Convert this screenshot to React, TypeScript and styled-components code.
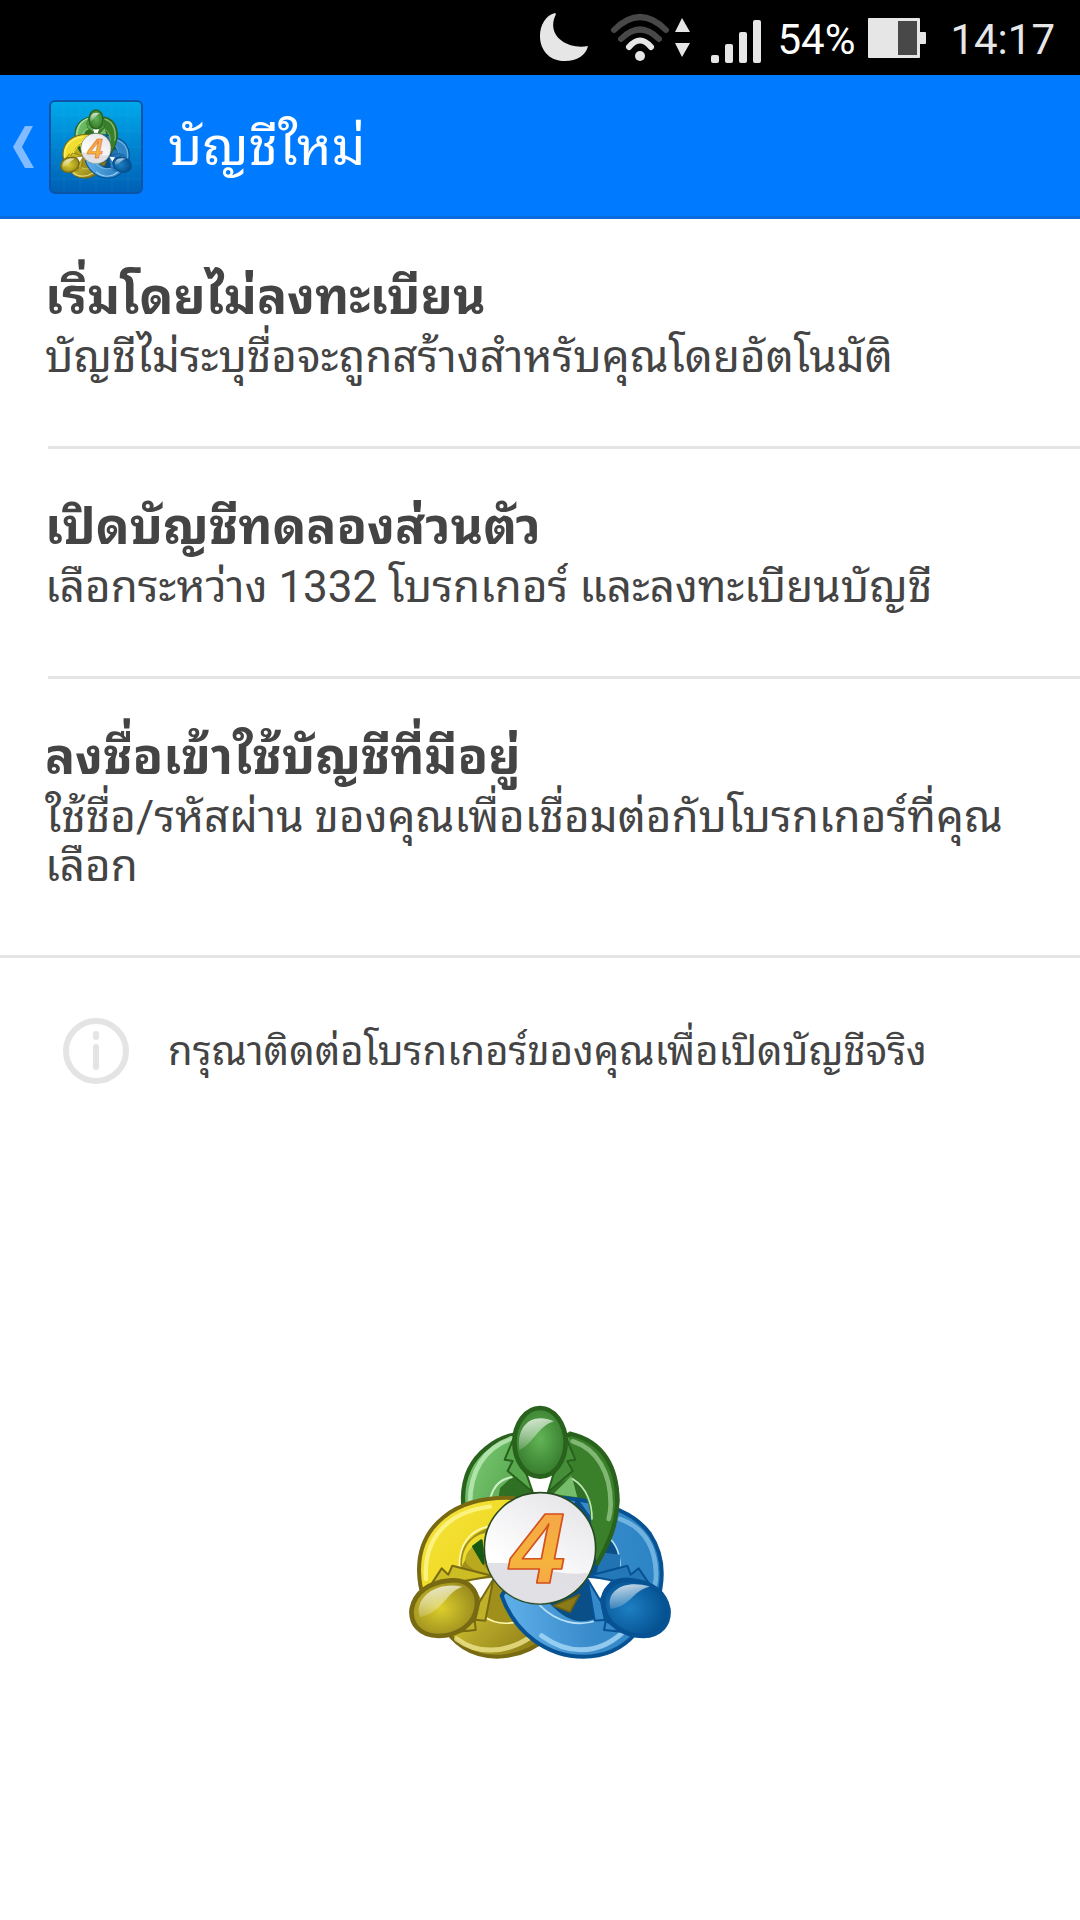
import React from "react";
import styled, { createGlobalStyle } from "styled-components";

const GlobalStyle = createGlobalStyle`
  *, *::before, *::after { box-sizing: border-box; }
  body {
    margin: 0;
    background: #fff;
    color: #444;
    font-family: Roboto, "Noto Sans Thai Looped", "Droid Sans Thai", "Noto Sans Thai UI", "Noto Sans Thai", "Noto Sans", sans-serif;
  }
`;

const Screen = styled.div`
  display: flex;
  flex-direction: column;
  min-height: 100vh;
`;

const StatusBar = styled.div`
  display: flex;
  align-items: center;
  justify-content: flex-end;
  height: 75px;
  padding: 0 25px 0 0;
  background: #000;
`;

const StatusIcons = styled.svg`
  display: block;
  width: 222px;
  height: 75px;
  margin-right: 16px;
`;

const StatusText = styled.span<{ $bright?: boolean }>`
  padding-top: 3px;
  color: ${(p) => (p.$bright ? "#fff" : "#e6e6e6")};
  font-size: 42px;
  line-height: 49px;
`;

const Battery = styled.svg`
  display: block;
  width: 58px;
  height: 75px;
  margin: 0 24px 0 13px;
`;

const AppBar = styled.header`
  display: flex;
  align-items: center;
  height: 144px;
  padding: 3px 48px 0 13px;
  background: #007aff;
  border-bottom: 3px solid #0a6bdc;
  color: #fff;
`;

const BackButton = styled.button`
  display: flex;
  align-items: center;
  padding: 0;
  border: 0;
  background: none;
  cursor: pointer;
`;

const BackArrow = styled.svg`
  width: 21px;
  height: 42px;
  margin-right: 15px;
`;

const AppIcon = styled.svg`
  width: 94px;
  height: 94px;
`;

const Title = styled.h1`
  margin: 0 0 0 25px;
  font-size: 53px;
  font-weight: 400;
  line-height: 64px;
`;

const List = styled.ul`
  margin: 0;
  padding: 0;
  list-style: none;
  border-bottom: 3px solid #e4e4e4;
`;

const Item = styled.li`
  & + &::before {
    content: "";
    display: block;
    height: 3px;
    margin-left: 48px;
    background: #e4e4e4;
  }
`;

const Option = styled.button`
  display: block;
  width: 100%;
  padding: 46px 48px 64px 45px;
  border: 0;
  background: none;
  color: inherit;
  font: inherit;
  text-align: left;
  cursor: pointer;
`;

const OptionTitle = styled.span`
  display: block;
  padding-bottom: 4px;
  font-size: 50px;
  font-weight: 700;
  line-height: 64px;
`;

const OptionText = styled.span`
  display: block;
  font-size: 44px;
  line-height: 49px;
`;

const Notice = styled.p`
  display: flex;
  align-items: center;
  gap: 39px;
  margin: 0;
  padding: 60px 48px 0 63px;
  font-size: 40px;
  line-height: 49px;
`;

const InfoIcon = styled.svg`
  flex: none;
  width: 66px;
  height: 66px;
`;

const Brand = styled.footer`
  display: flex;
  justify-content: center;
  padding-top: 321px;
`;

const BrandLogo = styled.svg`
  width: 264px;
  height: 254px;
`;

function Emblem({ id }: { id: string }) {
  const url = (name: string) => `url(#${id}-${name})`;
  return (
    <g strokeLinejoin="round" strokeLinecap="round">
      <defs>
        <linearGradient id={`${id}-green`} x1="0" y1="0.2" x2="1" y2="0.6">
          <stop offset="0" stopColor="#7cc873" />
          <stop offset="0.35" stopColor="#5bab54" />
          <stop offset="0.7" stopColor="#3b7f2b" />
          <stop offset="1" stopColor="#357a25" />
        </linearGradient>
        <linearGradient id={`${id}-yellow`} x1="0.1" y1="0.2" x2="0.8" y2="0.9">
          <stop offset="0" stopColor="#f3e033" />
          <stop offset="0.35" stopColor="#efd923" />
          <stop offset="0.65" stopColor="#b5a629" />
          <stop offset="1" stopColor="#8d7d16" />
        </linearGradient>
        <linearGradient id={`${id}-blue`} x1="0" y1="0.6" x2="1" y2="0.5">
          <stop offset="0" stopColor="#5fb0ea" />
          <stop offset="0.5" stopColor="#3a8ccb" />
          <stop offset="1" stopColor="#2b84c4" />
        </linearGradient>
        <radialGradient id={`${id}-greenHead`} cx="0.5" cy="0.45" r="0.6">
          <stop offset="0" stopColor="#62b457" />
          <stop offset="1" stopColor="#317527" />
        </radialGradient>
        <radialGradient id={`${id}-yellowHead`} cx="0.45" cy="0.5" r="0.6">
          <stop offset="0" stopColor="#ddce2c" />
          <stop offset="1" stopColor="#94861c" />
        </radialGradient>
        <radialGradient id={`${id}-blueHead`} cx="0.4" cy="0.5" r="0.6">
          <stop offset="0" stopColor="#1d7fc3" />
          <stop offset="1" stopColor="#034f8e" />
        </radialGradient>
        <linearGradient id={`${id}-shine`} x1="0.2" y1="0" x2="0.5" y2="1">
          <stop offset="0" stopColor="#fff" stopOpacity="0.8" />
          <stop offset="1" stopColor="#fff" stopOpacity="0.08" />
        </linearGradient>
        <linearGradient id={`${id}-disc`} x1="0.7" y1="0" x2="0.3" y2="0.7">
          <stop offset="0" stopColor="#e6e6ea" />
          <stop offset="1" stopColor="#fff" />
        </linearGradient>
        <linearGradient id={`${id}-digit`} x1="0" y1="0" x2="0" y2="1">
          <stop offset="0" stopColor="#f6a04d" />
          <stop offset="0.6" stopColor="#f5b43c" />
          <stop offset="1" stopColor="#f8a050" />
        </linearGradient>
      </defs>

      {/* green figure, behind */}
      <path d="M284 518C240 450 218 385 219 320C222 190 325 122 450 122C590 122 682 205 682 330C682 400 655 460 622 518L450 470Z" fill={url("green")} stroke="#28621d" strokeWidth="13" />
      <path d="M240 345C238 240 285 170 365 143" fill="none" stroke="#c6efc0" strokeOpacity="0.75" strokeWidth="14" />
      <path d="M300 335C310 290 335 265 370 260L450 290L555 262C590 300 600 350 596 420L300 430Z" fill="#2f7024" />
      <path d="M298 335C306 292 330 265 365 260L330 292L324 330Z" fill="#66b35c" />
      <path d="M298 335C306 292 330 265 365 260" fill="none" stroke="#c9f0c3" strokeWidth="6" />
      <path d="M490 310L545 255L562 320Z" fill="#76bd6b" />

      {/* yellow figure */}
      <path d="M370 322C190 315 86 410 87 540C88 590 98 640 150 690C190 765 245 798 320 798C375 798 430 778 480 735L570 620L440 560Z" fill={url("yellow")} stroke="#786a12" strokeWidth="12" />
      <path d="M108 565C100 450 165 365 300 348" fill="none" stroke="#fffaa0" strokeOpacity="0.7" strokeWidth="13" />
      <path d="M200 745C260 790 345 790 420 740" fill="none" stroke="#eee58c" strokeOpacity="0.8" strokeWidth="15" />
      <path d="M208 520C210 470 240 430 300 410L330 540L560 620L530 665C470 690 360 720 285 680L240 560Z" fill="#a08f1b" />
      <path d="M208 525C208 460 240 420 292 408" fill="none" stroke="#fff8b0" strokeWidth="5" />
      <path d="M280 675C310 700 350 702 390 692" fill="none" stroke="#fff8b0" strokeWidth="5" />
      <path d="M216 525C216 470 245 435 285 428L284 470L250 466Z" fill="#efdb2c" />
      <path d="M250 468L280 518L274 450Z" fill="#175a13" stroke="#175a13" strokeWidth="8" />
      <path d="M246 470C215 500 210 535 310 555L276 520Z" fill="#b8a91f" />

      {/* blue figure */}
      <path d="M335 615C375 730 475 798 580 798C650 798 700 770 735 730L800 640C825 560 820 490 780 430C740 375 670 335 520 322L440 460Z" fill={url("blue")} stroke="#075293" strokeWidth="12" />
      <path d="M690 385C760 410 795 465 798 545C799 570 795 585 788 595" fill="none" stroke="#9bd0f2" strokeOpacity="0.6" strokeWidth="14" />
      <path d="M455 735C530 790 620 795 695 728" fill="none" stroke="#a9daf8" strokeOpacity="0.8" strokeWidth="15" />
      <path d="M480 640C530 690 570 705 625 680L650 560L690 530C690 480 670 450 640 430L560 320L500 480Z" fill="#0a4f87" />
      <path d="M450 645C500 695 565 710 625 688" fill="none" stroke="#b8e0f8" strokeWidth="5" />
      <path d="M655 440C680 460 690 490 690 528" fill="none" stroke="#b8e0f8" strokeWidth="5" />
      <path d="M632 485L690 492V528L620 548Z" fill="#2273b3" />
      <path d="M490 645L568 612L540 664Z" fill="#8b7b18" stroke="#6e6110" strokeWidth="5" />

      {/* green right arm over blue */}
      <path d="M540 129C640 150 682 230 682 330C682 400 655 460 622 518C600 460 610 380 590 325C580 295 565 275 545 262Z" fill="#3a7f2a" />
      <path d="M540 129C640 152 682 230 682 330C682 400 655 460 622 518" fill="none" stroke="#28621d" strokeWidth="13" />
      <path d="M548 152C620 175 662 245 662 340C662 355 660 370 656 385" fill="none" stroke="#a6d69b" strokeOpacity="0.65" strokeWidth="14" />
      <path d="M548 265C590 290 607 340 606 385" fill="none" stroke="#c0e6b8" strokeWidth="5" />

      {/* collars and shirts */}
      <path d="M405 248L495 248L475 305L425 305Z" fill="#fff" />
      <path d="M370 145L344 207L368 211L353 241L428 304L410 252L385 215Z" fill="#58a84d" stroke="#28621d" strokeWidth="6" />
      <path d="M530 145L556 207L532 211L548 241L474 304L490 252L515 215Z" fill="#468f39" stroke="#28621d" strokeWidth="6" />
      <path d="M235 566L310 562L280 635Z" fill="#fff" />
      <path d="M118 590L155 533L175 552L187 525L308 556L240 568Z" fill="#cdbd25" stroke="#786a12" strokeWidth="6" />
      <path d="M310 566L286 690L254 687L257 718L190 725L255 690L268 635Z" fill="#c1b129" stroke="#786a12" strokeWidth="6" />
      <path d="M592 562L665 566L625 632Z" fill="#fff" />
      <path d="M785 590L746 533L722 552L712 525L596 556L660 568Z" fill="#2478b8" stroke="#075293" strokeWidth="6" />
      <path d="M593 566L614 690L648 687L642 718L710 725L645 690L634 635Z" fill="#368aca" stroke="#075293" strokeWidth="6" />

      {/* heads */}
      <ellipse cx="450" cy="155" rx="77" ry="103" fill={url("greenHead")} stroke="#28621d" strokeWidth="14" />
      <path d="M388 178C378 100 430 65 492 92C445 105 430 160 388 178Z" fill={url("shine")} />
      <path d="M175 570C235 562 268 600 260 650C254 700 205 735 145 736C90 735 60 700 65 655C74 605 120 575 175 570Z" fill={url("yellowHead")} stroke="#786a12" strokeWidth="14" />
      <path d="M90 680C70 625 135 570 218 588C165 605 165 660 90 680Z" fill={url("shine")} />
      <path d="M725 569C665 561 632 600 641 650C650 700 700 735 760 736C812 734 840 700 835 655C825 605 785 575 725 569Z" fill={url("blueHead")} stroke="#075293" strokeWidth="14" />
      <path d="M662 655C645 600 705 565 780 588C725 600 725 645 662 655Z" fill={url("shine")} />

      {/* centre disc */}
      <circle cx="450" cy="473" r="167" fill={url("disc")} stroke="#2a4b22" strokeWidth="5" />
      <path d="M290 517H365C430 519 500 560 596 546A164 164 0 0 1 290 517Z" fill="#d4d4da" fillOpacity="0.7" />
      <text x="443" y="577" textAnchor="middle" fontFamily='"Liberation Sans Narrow", "Liberation Sans", sans-serif' fontStyle="italic" fontWeight="700" fontSize="300" fill={url("digit")} stroke="#d4501c" strokeWidth="5">4</text>
    </g>
  );
}

const options = [
  {
    title: "เริ่มโดยไม่ลงทะเบียน",
    text: "บัญชีไม่ระบุชื่อจะถูกสร้างสำหรับคุณโดยอัตโนมัติ",
  },
  {
    title: "เปิดบัญชีทดลองส่วนตัว",
    text: "เลือกระหว่าง 1332 โบรกเกอร์ และลงทะเบียนบัญชี",
  },
  {
    title: "ลงชื่อเข้าใช้บัญชีที่มีอยู่",
    text: "ใช้ชื่อ/รหัสผ่าน ของคุณเพื่อเชื่อมต่อกับโบรกเกอร์ที่คุณเลือก",
  },
];

export default function App() {
  return (
    <Screen lang="th">
      <GlobalStyle />
      <StatusBar>
        <StatusIcons viewBox="539 0 222 75" aria-hidden="true">
          <path d="M555 13C534 18 533 61 565 61C577 61 586 55 588 46C568 50 545 36 556 14Z" fill="#e6e6e6" />
          <g fill="none" strokeLinecap="round" strokeWidth="6">
            <path d="M614 30Q640 4 666 30" stroke="#484848" />
            <path d="M621 39Q640 20 659 39" stroke="#484848" />
            <path d="M629 47Q640 34 651 47" stroke="#e6e6e6" />
          </g>
          <circle cx="640" cy="56" r="5" fill="#e6e6e6" />
          <path d="M682 18L690 32H675ZM682 57L690 43H675Z" fill="#e6e6e6" />
          <g fill="#e6e6e6">
            <rect x="711" y="55" width="8" height="8" rx="2" />
            <rect x="725" y="44" width="8" height="19" rx="2" />
            <rect x="739" y="32" width="8" height="31" rx="2" />
            <rect x="753" y="20" width="8" height="43" rx="2" />
          </g>
        </StatusIcons>
        <StatusText $bright>54%</StatusText>
        <Battery viewBox="868 0 58 75" aria-hidden="true">
          <rect x="868" y="18" width="52" height="40" rx="1" fill="#e6e6e6" />
          <rect x="898" y="21" width="19" height="34" fill="#484848" />
          <rect x="919" y="32" width="7" height="12" rx="1" fill="#e6e6e6" />
        </Battery>
        <StatusText as="time">14:17</StatusText>
      </StatusBar>

      <AppBar>
        <BackButton aria-label="กลับ">
          <BackArrow viewBox="0 0 21 42" aria-hidden="true">
            <path d="M12 0H20L9 21L21 42H12L0 21Z" fill="#80bcff" />
          </BackArrow>
          <AppIcon viewBox="0 0 94 94" aria-hidden="true">
            <defs>
              <linearGradient id="tile" x1="0" y1="0" x2="0" y2="1">
                <stop offset="0" stopColor="#00aaeb" />
                <stop offset="0.5" stopColor="#0083d0" />
                <stop offset="1" stopColor="#0060b4" />
              </linearGradient>
            </defs>
            <rect x="1" y="1" width="92" height="92" rx="5" fill="url(#tile)" stroke="#0a55a8" strokeWidth="2" />
            <path d="M15 2V92M31 2V92M47 2V92M63 2V92M79 2V92M2 15H92M2 31H92M2 47H92M2 63H92M2 79H92" stroke="#4cc0f5" strokeOpacity="0.12" />
            <svg x="11" y="9" width="72" height="70" viewBox="55 45 790 760">
              <Emblem id="tile-emblem" />
            </svg>
          </AppIcon>
        </BackButton>
        <Title>บัญชีใหม่</Title>
      </AppBar>

      <main>
        <List>
          {options.map((option) => (
            <Item key={option.title}>
              <Option>
                <OptionTitle>{option.title}</OptionTitle>
                <OptionText>{option.text}</OptionText>
              </Option>
            </Item>
          ))}
        </List>
        <Notice>
          <InfoIcon viewBox="0 0 66 66" aria-hidden="true">
            <circle cx="33" cy="33" r="30" fill="none" stroke="#e4e4e4" strokeWidth="6" />
            <rect x="30" y="13" width="6" height="9" rx="3" fill="#e4e4e4" />
            <rect x="30" y="26" width="6" height="26" rx="3" fill="#e4e4e4" />
          </InfoIcon>
          กรุณาติดต่อโบรกเกอร์ของคุณเพื่อเปิดบัญชีจริง
        </Notice>
      </main>

      <Brand>
        <BrandLogo viewBox="55 43 790 762" role="img" aria-label="MetaTrader 4">
          <Emblem id="brand" />
        </BrandLogo>
      </Brand>
    </Screen>
  );
}
